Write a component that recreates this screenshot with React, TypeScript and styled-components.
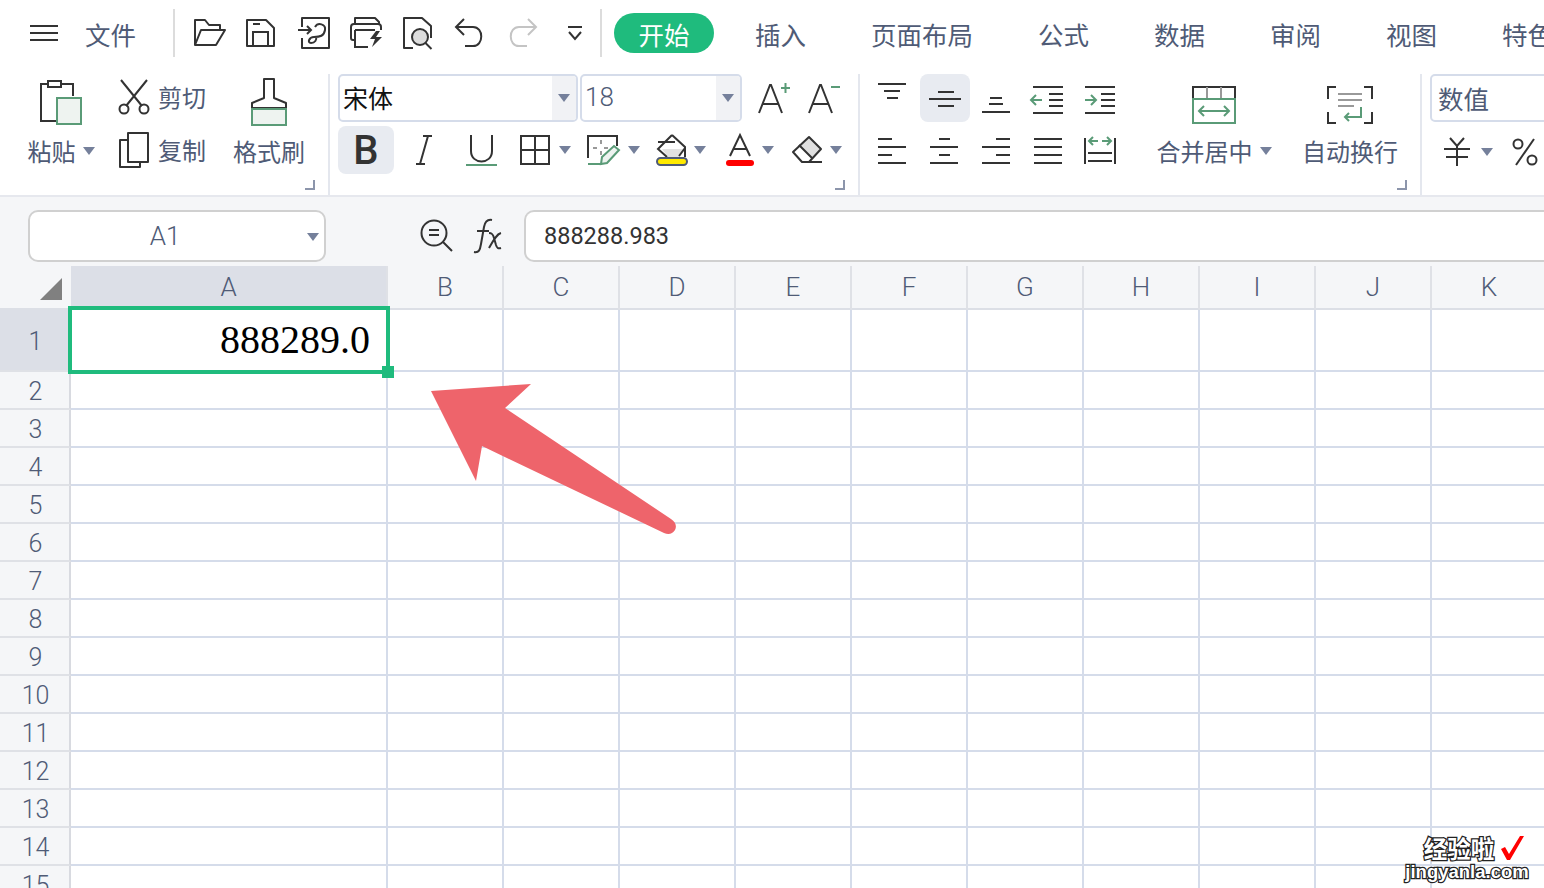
import React from "react";
import styled, { createGlobalStyle } from "styled-components";

const CJK = `"Noto Sans CJK SC", "Roboto", sans-serif`;
const LATIN = `"Roboto", "Noto Sans CJK SC", sans-serif`;
const INK = "#333";
const SLATE = "#4f5b76";
const GREEN = "#5a9b77";
const LINE = "#d5dcea";

const GlobalStyle = createGlobalStyle`
  html, body {
    margin: 0;
    padding: 0;
    background: #fff;
    overflow: hidden;
  }
`;

const Page = styled.div`
  position: relative;
  width: 1544px;
  height: 888px;
  overflow: hidden;
  background: #fff;
  font-family: ${CJK};
  color: ${SLATE};
`;

/* top menu */
const MenuBar = styled.div`
  display: flex;
  align-items: center;
  height: 68px;
  padding: 0 0 2px 30px;
  box-sizing: border-box;
  white-space: nowrap;
`;

const MenuFile = styled.span`
  flex: none;
  width: 50px;
  font-size: 25.500px;
  margin: 0 38px 0 27px;
`;

const MenuDivider = styled.div`
  flex: none;
  width: 2px;
  height: 48px;
  background: #dcdcdc;
`;

const QuickIcons = styled.div`
  flex: none;
  display: flex;
  align-items: center;
  width: 425px;
  padding-left: 19px;
  box-sizing: border-box;
`;

const QuickSlot = styled.div<{ $w: number }>`
  width: ${({ $w }) => $w}px;
  display: flex;
`;

const StartTab = styled.div`
  flex: none;
  width: 100px;
  height: 40px;
  margin: 0 41px 0 12px;
  border-radius: 20px;
  background: #1fbb7d;
  color: #fff;
  font-size: 25.500px;
  display: flex;
  align-items: center;
  justify-content: center;
`;

const MenuTab = styled.span`
  flex: none;
  font-size: 25.500px;
  margin-right: 65px;
`;

/* ribbon */
const Ribbon = styled.div`
  display: flex;
  height: 127px;
  border-bottom: 2px solid #e6e8ee;
  box-sizing: content-box;
`;

const Group = styled.div<{ $w: number }>`
  position: relative;
  flex: none;
  width: ${({ $w }) => $w}px;
  box-sizing: border-box;
  display: flex;
  height: 121px;
  margin-top: 6px;
  border-right: 2px solid #e4e7ee;
`;

const CornerMark = styled.div`
  position: absolute;
  right: 13px;
  bottom: 5px;
  width: 10px;
  height: 10px;
  border-right: 2px solid #8c95ab;
  border-bottom: 2px solid #8c95ab;
  box-sizing: border-box;
`;

const BigCol = styled.div<{ $w: number; $ml?: number }>`
  flex: none;
  width: ${({ $w }) => $w}px;
  margin-left: ${({ $ml }) => $ml || 0}px;
  display: flex;
  flex-direction: column;
  align-items: center;
`;

const BigIconBox = styled.div<{ $lift?: number }>`
  height: 52px;
  padding-bottom: ${({ $lift }) => $lift || 0}px;
  box-sizing: border-box;
  display: flex;
  align-items: flex-end;
`;

const BigLabel = styled.div`
  display: flex;
  align-items: center;
  gap: 7px;
  font-size: 24px;
  line-height: 32px;
  margin-top: 9px;
  white-space: nowrap;
`;

const StackCol = styled.div`
  flex: none;
  width: 115px;
  margin-left: -2px;
  display: flex;
  flex-direction: column;
  gap: 13px;
  padding-top: 2px;
`;

const StackRow = styled.div`
  height: 40px;
  display: flex;
  align-items: center;
  gap: 8px;
  font-size: 24px;
`;

const StackIcon = styled.div`
  width: 32px;
  padding-top: 2px;
  display: flex;
  justify-content: center;
`;

const Caret = styled.i`
  display: inline-block;
  flex: none;
  width: 0;
  height: 0;
  border-left: 6px solid transparent;
  border-right: 6px solid transparent;
  border-top: 8px solid #75809b;
`;

const FontPanel = styled.div`
  display: flex;
  flex-direction: column;
  gap: 4px;
  padding-left: 8px;
`;

const PanelRow = styled.div`
  display: flex;
  align-items: center;
  height: 48px;
`;

const SelectBox = styled.div<{ $w: number; $ml?: number }>`
  flex: none;
  width: ${({ $w }) => $w}px;
  margin-left: ${({ $ml }) => $ml || 0}px;
  height: 48px;
  box-sizing: border-box;
  border: 2px solid ${LINE};
  border-radius: 5px;
  display: flex;
  align-items: center;
  overflow: hidden;
`;

const SelectText = styled.span<{ $dark?: boolean; $size: number; $pl: number; $font?: string }>`
  flex: 1;
  padding-left: ${({ $pl }) => $pl}px;
  padding-bottom: 2px;
  font-size: ${({ $size }) => $size}px;
  font-family: ${({ $font }) => $font || CJK};
  font-weight: ${({ $font }) => ($font ? 300 : 400)};
  color: ${({ $dark }) => ($dark ? "#111" : SLATE)};
`;

const SelectArrow = styled.div`
  flex: none;
  width: 24px;
  height: 100%;
  background: #f1f2f5;
  display: flex;
  align-items: center;
  justify-content: center;
`;

const Tool = styled.div<{ $ml?: number; $gap?: number }>`
  flex: none;
  margin-left: ${({ $ml }) => $ml || 0}px;
  display: flex;
  align-items: center;
  gap: ${({ $gap }) => $gap ?? 9}px;
`;

const BoldButton = styled.div`
  flex: none;
  width: 56px;
  height: 48px;
  border-radius: 8px;
  background: #e8ebf1;
  color: ${INK};
  font-family: ${LATIN};
  font-size: 40px;
  font-weight: 500;
  display: flex;
  align-items: center;
  justify-content: center;
`;

const AlignPanel = styled.div`
  flex: none;
  margin-left: 6px;
  display: grid;
  grid-template-columns: repeat(5, 52px);
  grid-auto-rows: 48px;
  row-gap: 4px;
`;

const AlignCell = styled.div<{ $on?: boolean }>`
  display: flex;
  align-items: center;
  justify-content: center;
  margin-left: ${({ $on }) => ($on ? 2 : 0)}px;
  border-radius: 8px;
  background: ${({ $on }) => ($on ? "#e8ebf1" : "transparent")};
`;

const NumberPanel = styled.div`
  display: flex;
  flex-direction: column;
  gap: 4px;
  padding: 6px 0 0 8px;
`;

const NumberRow = styled.div`
  display: flex;
  align-items: center;
  height: 48px;
  box-sizing: border-box;
  padding: 4px 0 0 14px;
`;

/* formula bar */
const FormulaBar = styled.div`
  display: flex;
  align-items: center;
  height: 69px;
  box-sizing: border-box;
  padding: 13px 0 4px 28px;
  background: #f5f6f8;
`;

const NameBox = styled.div`
  position: relative;
  flex: none;
  width: 298px;
  height: 52px;
  box-sizing: border-box;
  border: 2px solid #d0d0d0;
  border-radius: 10px;
  background: #fff;
  display: flex;
  align-items: center;
  justify-content: center;
  padding-right: 24px;
  font-family: ${LATIN};
  font-weight: 300;
  font-size: 26px;

  ${Caret} {
    position: absolute;
    right: 5px;
    top: 21px;
  }
`;

const FxGroup = styled.div`
  flex: none;
  width: 198px;
  display: flex;
  align-items: center;
  padding-left: 94px;
  gap: 19px;
  box-sizing: border-box;
`;

const FormulaInput = styled.div`
  flex: 1;
  height: 52px;
  box-sizing: border-box;
  border: 2px solid #d0d0d0;
  border-right: none;
  border-radius: 10px 0 0 10px;
  background: #fff;
  color: ${INK};
  font-family: ${LATIN};
  font-size: 23.500px;
  display: flex;
  align-items: center;
  padding-left: 18px;
`;

/* sheet */
const Sheet = styled.div`
  position: relative;
  height: 622px;
  overflow: hidden;
  display: grid;
  grid-template-columns: 71px 317px repeat(10, 116px);
  grid-template-rows: 44px 62px;
  grid-auto-rows: 38px;
  font-family: ${LATIN};
  font-weight: 300;
`;

const Corner = styled.div`
  position: relative;
  background: #f5f6f8;
  border-bottom: 2px solid #dcdfe6;
  box-sizing: border-box;
`;

const CornerTriangle = styled.div`
  position: absolute;
  left: 40px;
  top: 12px;
  width: 0;
  height: 0;
  border-left: 22px solid transparent;
  border-bottom: 22px solid #808080;
`;

const ColHead = styled.div<{ $on?: boolean }>`
  background: ${({ $on }) => ($on ? "#dcdfe7" : "#f5f6f8")};
  border-right: 2px solid #dfe1e6;
  border-bottom: 2px solid #dcdfe6;
  box-sizing: border-box;
  font-size: 26px;
  display: flex;
  align-items: center;
  justify-content: center;
`;

const RowHead = styled.div<{ $on?: boolean }>`
  background: ${({ $on }) => ($on ? "#dcdfe7" : "#f5f6f8")};
  border-right: 2px solid #d8dae0;
  border-bottom: 2px solid #dfe1e6;
  box-sizing: border-box;
  font-size: 25px;
  display: flex;
  align-items: center;
  justify-content: center;
  padding: 3px 0 0 2px;
`;

const Cell = styled.div`
  border-right: 2px solid ${LINE};
  border-bottom: 2px solid ${LINE};
  box-sizing: border-box;
`;

const Selection = styled.div`
  position: absolute;
  left: 68px;
  top: 40px;
  width: 322px;
  height: 68px;
  box-sizing: border-box;
  border: 4px solid #1fbb7d;
  display: flex;
  align-items: center;
  justify-content: flex-end;
  padding: 0 16px 2px 0;
  color: #000;
  font-family: "Liberation Serif", serif;
  font-weight: 400;
  font-size: 40px;
`;

const FillHandle = styled.div`
  position: absolute;
  right: -8px;
  bottom: -8px;
  width: 12px;
  height: 12px;
  background: #1fbb7d;
`;

const ArrowOverlay = styled.svg`
  position: absolute;
  left: 420px;
  top: 112px;
`;

const Watermark = styled.div`
  position: absolute;
  left: 1402px;
  top: 833px;
  width: 130px;
  color: #fff;
  font-weight: 700;
  text-align: center;
  -webkit-text-stroke: 2.500px #222;
  paint-order: stroke fill;
`;

const MarkTop = styled.div`
  display: flex;
  align-items: center;
  justify-content: center;
  gap: 6px;
  padding-left: 14px;
  font-size: 23.500px;
  line-height: 30px;
`;

const MarkBottom = styled.div`
  font-family: "Liberation Sans", sans-serif;
  font-size: 18.500px;
  line-height: 17px;
`;

const Svg = styled.svg`
  display: block;
  flex: none;
  overflow: visible;
  fill: none;
  stroke: ${INK};
  stroke-width: 2;
`;

type IconProps = { w: number; h: number; children: React.ReactNode };

const Icon: React.FC<IconProps> = ({ w, h, children }) => (
  <Svg width={w} height={h} viewBox={`0 0 ${w} ${h}`}>
    {children}
  </Svg>
);

const G = { stroke: GREEN, fill: "#eef3f0" };

const Hamburger = () => (
  <Icon w={28} h={18}>
    <path d="M0 2h28M0 9h28M0 16h28" />
  </Icon>
);

const OpenIcon = () => (
  <Icon w={32} h={28}>
    <path d="M1 26V1h10l4 5h11v5" strokeLinejoin="round" />
    <path d="M1 26L7 11h24l-9 15z" strokeLinejoin="round" />
  </Icon>
);

const SaveIcon = () => (
  <Icon w={30} h={28}>
    <path d="M1 1h19l8 8v18H1z" strokeLinejoin="round" />
    <path d="M7 27V13h15v14M7 5h7" />
  </Icon>
);

const ImportIcon = () => (
  <Icon w={32} h={32}>
    <path d="M4 10V1h27v30H4v-10" strokeLinejoin="round" />
    <path d="M0 13h13M9 9l4 4-4 4" />
    <path d="M17 10c3-5 11-3 10 3s-5 7-11 7c-5 0-7 6-3 6s6-3 5-7" />
  </Icon>
);

const PrintIcon = () => (
  <Icon w={34} h={32}>
    <path d="M5 7V1h20l4 4v2" strokeLinejoin="round" />
    <path d="M4 23H3q-2 0-2-2V10q0-3 3-3h24q3 0 3 3v3" />
    <path d="M5 13h20M5 13v17h13" />
    <path d="M26 14l-6 8h5l-3 8 10-10h-6l4-6z" fill={INK} stroke="none" />
  </Icon>
);

const PreviewIcon = () => (
  <Icon w={30} h={32}>
    <path d="M10 31H1V1h18l9 8v12" strokeLinejoin="round" />
    <circle cx="17" cy="20" r="8" fill="#ddd" />
    <path d="M22.500 26l6 6" />
  </Icon>
);

const UndoIcon = ({ color = INK }: { color?: string }) => (
  <Icon w={28} h={30}>
    <g stroke={color}>
      <path d="M9 1L1 9l8 8" />
      <path d="M1 9h17c11 0 11 19 0 19h-8" />
    </g>
  </Icon>
);

const RedoIcon = () => (
  <Icon w={28} h={30}>
    <g stroke="#c4c4c4">
      <path d="M19 1l8 8-8 8" />
      <path d="M27 9H10C-1 9-1 28 10 28h8" />
    </g>
  </Icon>
);

const MoreIcon = () => (
  <Icon w={16} h={16}>
    <path d="M1 2h14M2 7l6 7 6-7" />
  </Icon>
);

const PasteIcon = () => (
  <Icon w={42} h={46}>
    <path d="M8 4H1v37h16" />
    <path d="M8 1h13v6H8zM21 4h12v12" />
    <rect x="17" y="18" width="24" height="26" style={G} />
  </Icon>
);

const CutIcon = () => (
  <Icon w={32} h={36}>
    <path d="M3 1l21 26M29 1L8 27" />
    <circle cx="6" cy="30" r="4.500" />
    <circle cx="26" cy="30" r="4.500" />
  </Icon>
);

const CopyIcon = () => (
  <Icon w={30} h={36}>
    <path d="M9 1h20v29H9z" strokeLinejoin="round" />
    <path d="M9 8H1v27h20v-5" strokeLinejoin="round" />
  </Icon>
);

const BrushIcon = () => (
  <Icon w={36} h={48}>
    <path d="M13 1h10v19l12 5v5H1v-5l12-5z" strokeLinejoin="round" />
    <rect x="1" y="31" width="34" height="16" style={G} />
  </Icon>
);

const GrowIcon = ({ sign }: { sign: "+" | "-" }) => (
  <Icon w={32} h={32}>
    <path d="M1 31L12 3h1l11 28M5 22h15" />
    <path d={sign === "+" ? "M23 6h9M27.500 1v10" : "M23 5h9"} stroke={GREEN} />
  </Icon>
);

const ItalicIcon = () => (
  <Icon w={20} h={30}>
    <path d="M9 1h9M2 29h9M14 1L6 29" />
  </Icon>
);

const UnderlineIcon = () => (
  <Icon w={31} h={32}>
    <path d="M5 1v16c0 14 21 14 21 0V1" />
    <path d="M0 31h31" stroke={GREEN} />
  </Icon>
);

const BorderIcon = () => (
  <Icon w={30} h={30}>
    <path d="M1 1h28v28H1zM15 1v28M1 15h28" />
  </Icon>
);

const ShadeIcon = () => (
  <Icon w={32} h={32}>
    <path d="M1 24V2h29v10" />
    <path d="M14 6v4M14 17v4M6 14h4M17 14h4" stroke="#999" />
    <path d="M1 30h14" stroke={GREEN} />
    <path d="M14 30l1-7 12-11 5 4-12 13z" stroke={GREEN} fill="#eef3f0" />
  </Icon>
);

const FillIcon = () => (
  <Icon w={32} h={32}>
    <path d="M6 15h23l-5 8H12z" fill="#e2e2e2" stroke="none" />
    <path d="M16 1L2 15l9 8M16 1l13 12v10M2 8h17M29 14l-6 8" />
    <rect x="1" y="24" width="30" height="7" rx="3.500" fill="#ffea00" stroke={SLATE} />
  </Icon>
);

const FontColorIcon = () => (
  <Icon w={28} h={32}>
    <path d="M4 22L14 1l10 21M8 15h12" />
    <rect x="0" y="26" width="28" height="6" rx="3" fill="#f00" stroke="none" />
  </Icon>
);

const EraserIcon = () => (
  <Icon w={32} h={28}>
    <path d="M17 1l12 12-10 9L7 9z" fill="#e0e0e0" stroke="none" />
    <path d="M17 1l12 12-12 13h-7L1 16z" strokeLinejoin="round" />
    <path d="M7 9l13 13M17 26h13" />
  </Icon>
);

const MergeIcon = () => (
  <Icon w={44} h={38}>
    <path d="M1 13V1h42v12" />
    <path d="M15 1v12M29 1v12" stroke="#999" />
    <rect x="1" y="13" width="42" height="24" stroke={GREEN} />
    <path d="M7 25h30M12 20l-5 5 5 5M32 20l5 5-5 5" stroke={GREEN} />
  </Icon>
);

const WrapIcon = () => (
  <Icon w={46} h={38}>
    <path d="M9 1H1v12M37 1h8v12M1 26v11h8M45 26v11h-8" />
    <path d="M11 8h24M11 14h24M11 20h16" stroke="#999" />
    <path d="M34 21v10H18M22 27l-4 4 4 4" stroke={GREEN} />
  </Icon>
);

const PercentIcon = () => (
  <Icon w={26} h={28}>
    <circle cx="6" cy="6" r="4.500" />
    <circle cx="20" cy="22" r="4.500" />
    <path d="M22 1L4 27" />
  </Icon>
);

const YuanIcon = () => (
  <Icon w={26} h={28}>
    <path d="M6 0l7 8 7-8M0 11h26M2 19h22M13 8v20" />
  </Icon>
);

const ZoomIcon = () => (
  <Icon w={34} h={34}>
    <circle cx="14" cy="14" r="12.500" />
    <path d="M9 11h10M9 16h10M23 23l9 9" />
  </Icon>
);

const FxIcon = () => (
  <Icon w={30} h={34}>
    <path d="M1 33c5 1 6-2 7-8l3-17c1-5 3-8 8-7M4 12h12" />
    <path d="M16 14c3 0 4 1 5 5l2 7c1 3 2 4 5 3M28 14c-4 1-7 6-12 15" />
  </Icon>
);

// each line is [x1, x2, y], green marks are added as a path
type AlignDef = { w: number; lines: [number, number, number][]; green?: string; bars?: string };

const aligns: AlignDef[] = [
  { w: 28, lines: [[0, 28, 1], [6, 22, 8], [9, 20, 15]] },
  { w: 32, lines: [[9, 25, 9], [0, 32, 16], [9, 25, 23]] },
  { w: 28, lines: [[8, 20, 15], [7, 21, 21], [0, 28, 29]] },
  { w: 30, lines: [[0, 30, 4], [16, 30, 11], [16, 30, 17], [16, 30, 23], [0, 30, 30]], green: "M-2 17h11M3 12l-5 5 5 5" },
  { w: 30, lines: [[0, 30, 4], [16, 30, 11], [16, 30, 17], [16, 30, 23], [0, 30, 30]], green: "M0 17h11M6 12l5 5-5 5" },
  { w: 28, lines: [[0, 14, 4], [0, 28, 12], [0, 14, 20], [0, 28, 28]] },
  { w: 28, lines: [[9, 20, 4], [0, 28, 12], [9, 20, 20], [0, 28, 28]] },
  { w: 28, lines: [[14, 28, 4], [0, 28, 12], [14, 28, 20], [0, 28, 28]] },
  { w: 28, lines: [[0, 28, 4], [0, 28, 12], [0, 28, 20], [0, 28, 28]] },
  { w: 32, lines: [[4, 28, 18], [4, 28, 26]], bars: "M1 3v26M31 3v26", green: "M5 6h9M9 2L5 6l4 4M18 6h9M23 2l4 4-4 4" },
];

const AlignIcon: React.FC<{ def: AlignDef }> = ({ def }) => (
  <Icon w={def.w} h={30}>
    <path d={def.lines.map(([a, b, y]) => `M${a} ${y}H${b}`).join("")} />
    {def.bars && <path d={def.bars} />}
    {def.green && <path d={def.green} stroke={GREEN} />}
  </Icon>
);

const quickIcons: [number, React.ReactNode][] = [
  [52, <OpenIcon />],
  [52, <SaveIcon />],
  [52, <ImportIcon />],
  [53, <PrintIcon />],
  [52, <PreviewIcon />],
  [54, <UndoIcon />],
  [58, <RedoIcon />],
  [16, <MoreIcon />],
];

const tabs = ["插入", "页面布局", "公式", "数据", "审阅", "视图", "特色"];
const columns = ["B", "C", "D", "E", "F", "G", "H", "I", "J", "K"];
const rows = Array.from({ length: 14 }, (_, i) => i + 2);

export default function App() {
  return (
    <Page>
      <GlobalStyle />
      <MenuBar>
        <Hamburger />
        <MenuFile>文件</MenuFile>
        <MenuDivider />
        <QuickIcons>
          {quickIcons.map(([w, icon], i) => (
            <QuickSlot key={i} $w={w}>
              {icon}
            </QuickSlot>
          ))}
        </QuickIcons>
        <MenuDivider />
        <StartTab>开始</StartTab>
        {tabs.map((t) => (
          <MenuTab key={t}>{t}</MenuTab>
        ))}
      </MenuBar>

      <Ribbon>
        <Group $w={330}>
          <BigCol $w={118} $ml={2}>
            <BigIconBox>
              <PasteIcon />
            </BigIconBox>
            <BigLabel>
              粘贴
              <Caret />
            </BigLabel>
          </BigCol>
          <StackCol>
            <StackRow>
              <StackIcon>
                <CutIcon />
              </StackIcon>
              剪切
            </StackRow>
            <StackRow>
              <StackIcon>
                <CopyIcon />
              </StackIcon>
              复制
            </StackRow>
          </StackCol>
          <BigCol $w={72}>
            <BigIconBox>
              <BrushIcon />
            </BigIconBox>
            <BigLabel>格式刷</BigLabel>
          </BigCol>
          <CornerMark />
        </Group>

        <Group $w={530}>
          <FontPanel>
            <PanelRow>
              <SelectBox $w={240}>
                <SelectText $dark $size={25} $pl={3}>
                  宋体
                </SelectText>
                <SelectArrow>
                  <Caret />
                </SelectArrow>
              </SelectBox>
              <SelectBox $w={162} $ml={2}>
                <SelectText $size={26} $pl={3} $font={LATIN}>
                  18
                </SelectText>
                <SelectArrow>
                  <Caret />
                </SelectArrow>
              </SelectBox>
              <Tool $ml={16}>
                <GrowIcon sign="+" />
              </Tool>
              <Tool $ml={18}>
                <GrowIcon sign="-" />
              </Tool>
            </PanelRow>
            <PanelRow>
              <BoldButton>B</BoldButton>
              <Tool $ml={20}>
                <ItalicIcon />
              </Tool>
              <Tool $ml={32}>
                <UnderlineIcon />
              </Tool>
              <Tool $ml={23}>
                <BorderIcon />
                <Caret />
              </Tool>
              <Tool $ml={16}>
                <ShadeIcon />
                <Caret />
              </Tool>
              <Tool $ml={16} $gap={6}>
                <FillIcon />
                <Caret />
              </Tool>
              <Tool $ml={20} $gap={8}>
                <FontColorIcon />
                <Caret />
              </Tool>
              <Tool $ml={18} $gap={6}>
                <EraserIcon />
                <Caret />
              </Tool>
            </PanelRow>
          </FontPanel>
          <CornerMark />
        </Group>

        <Group $w={562}>
          <AlignPanel>
            {aligns.map((a, i) => (
              <AlignCell key={i} $on={i === 1}>
                <AlignIcon def={a} />
              </AlignCell>
            ))}
          </AlignPanel>
          <BigCol $w={176}>
            <BigIconBox $lift={2}>
              <MergeIcon />
            </BigIconBox>
            <BigLabel>
              合并居中
              <Caret />
            </BigLabel>
          </BigCol>
          <BigCol $w={96}>
            <BigIconBox $lift={2}>
              <WrapIcon />
            </BigIconBox>
            <BigLabel>自动换行</BigLabel>
          </BigCol>
          <CornerMark />
        </Group>

        <NumberPanel>
          <SelectBox $w={200}>
            <SelectText $size={25.500} $pl={6}>
              数值
            </SelectText>
          </SelectBox>
          <NumberRow>
            <Tool $gap={11}>
              <YuanIcon />
              <Caret />
            </Tool>
            <Tool $ml={19}>
              <PercentIcon />
            </Tool>
          </NumberRow>
        </NumberPanel>
      </Ribbon>

      <FormulaBar>
        <NameBox>
          A1
          <Caret />
        </NameBox>
        <FxGroup>
          <ZoomIcon />
          <FxIcon />
        </FxGroup>
        <FormulaInput>888288.983</FormulaInput>
      </FormulaBar>

      <Sheet>
        <Corner>
          <CornerTriangle />
        </Corner>
        <ColHead $on>A</ColHead>
        {columns.map((c) => (
          <ColHead key={c}>{c}</ColHead>
        ))}
        <RowHead $on>1</RowHead>
        {columns.map((c) => (
          <Cell key={c} />
        ))}
        <Cell />
        {rows.map((r) => (
          <React.Fragment key={r}>
            <RowHead>{r}</RowHead>
            <Cell />
            {columns.map((c) => (
              <Cell key={c} />
            ))}
          </React.Fragment>
        ))}
        <Selection>
          888289.0
          <FillHandle />
        </Selection>
        <ArrowOverlay width="260" height="160" viewBox="420 378 260 160">
          <path
            d="M431 391L531 384L505 408L671 519Q678 524 675 530Q671 536 664 533L482 446L476 481Z"
            fill="#ee646b"
          />
        </ArrowOverlay>
      </Sheet>

      <Watermark>
        <MarkTop>
          经验啦
          <svg width="24" height="26" viewBox="0 0 24 26">
            <path d="M1 14l4-2 4 7L20 1h4L10 25H7z" fill="#f00" stroke="none" />
          </svg>
        </MarkTop>
        <MarkBottom>jingyanla.com</MarkBottom>
      </Watermark>
    </Page>
  );
}
